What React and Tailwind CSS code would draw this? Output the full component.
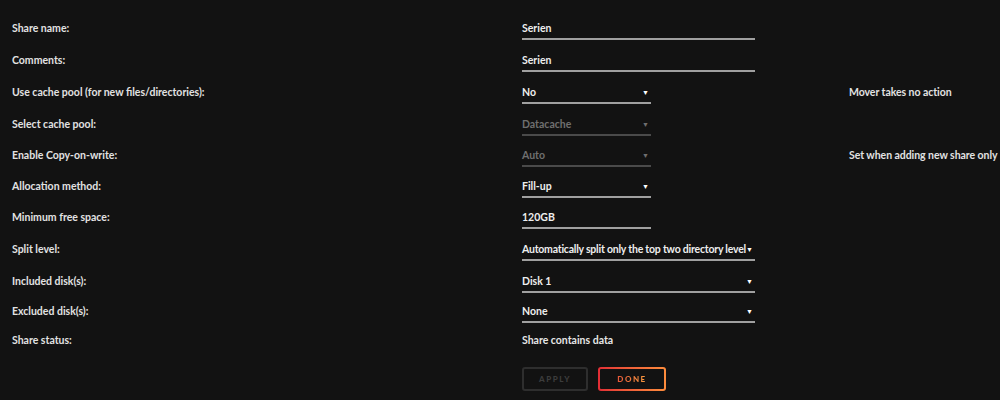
import { useState } from 'react';

const rows = [
  { label: 'Share name:', kind: 'input', value: 'Serien', w: 'w-[233px]', h: 'h-[32px]' },
  { label: 'Comments:', kind: 'input', value: 'Serien', w: 'w-[233px]', h: 'h-[32px]' },
  { label: 'Use cache pool (for new files/directories):', kind: 'select', value: 'No', w: 'w-[129px]', h: 'h-[32px]', help: 'Mover takes no action' },
  { label: 'Select cache pool:', kind: 'select', value: 'Datacache', w: 'w-[129px]', h: 'h-[31px]', disabled: true },
  { label: 'Enable Copy-on-write:', kind: 'select', value: 'Auto', w: 'w-[129px]', h: 'h-[31px]', disabled: true, help: 'Set when adding new share only' },
  { label: 'Allocation method:', kind: 'select', value: 'Fill-up', w: 'w-[129px]', h: 'h-[31px]' },
  { label: 'Minimum free space:', kind: 'input', value: '120GB', w: 'w-[129px]', h: 'h-[32px]' },
  { label: 'Split level:', kind: 'select', value: 'Automatically split only the top two directory level', w: 'w-[233px]', h: 'h-[32px]', tight: true },
  { label: 'Included disk(s):', kind: 'select', value: 'Disk 1', w: 'w-[233px]', h: 'h-[30px]' },
  { label: 'Excluded disk(s):', kind: 'select', value: 'None', w: 'w-[233px]', h: 'h-[29px]' },
  { label: 'Share status:', kind: 'text', value: 'Share contains data', h: 'h-[28px]' },
];

function Control({ row }) {
  if (row.kind === 'text') {
    return <div className="leading-[22px] text-[#e6e6e6]">{row.value}</div>;
  }
  const line = row.disabled ? 'border-[#4a4a4a]' : 'border-[#a0a0a0]';
  const color = row.disabled ? 'text-[#6f6f6f]' : 'text-[#eeeeee]';
  return (
    <div className={`${row.w} h-[23px] border-b-2 ${line} flex items-start ${row.tight ? '' : 'justify-between'} leading-[22px] ${color}`}>
      <span className={`whitespace-nowrap ${row.tight ? 'tracking-[-0.22px]' : ''}`}>{row.value}</span>
      {row.kind === 'select' && (
        <span className={`text-[7px] leading-[22px] ${row.tight ? '' : 'pr-[2px]'} ${row.disabled ? 'text-[#6f6f6f]' : 'text-white'}`}>▼</span>
      )}
    </div>
  );
}

export default function App() {
  const [rowsState] = useState(rows);

  return (
    <div className="w-[1000px] h-[400px] bg-[#121212] pt-[12px] pl-[12px] overflow-hidden font-['Lato',sans-serif] font-bold text-[10.5px] text-[#e2e2e2]">
      {rowsState.map((row) => (
        <div key={row.label} className={`${row.h} grid grid-cols-[510px_327px_1fr] items-start pt-[5px]`}>
          <div className="leading-[22px]">{row.label}</div>
          <Control row={row} />
          <div className="leading-[22px] whitespace-nowrap tracking-[-0.05px]">{row.help}</div>
        </div>
      ))}
      <div className="flex gap-[10px] ml-[510px] mt-[15px]">
        <button className="w-[66px] h-[24px] border-2 border-[#2e2e2e] rounded-[3px] text-[8px] font-black tracking-[1.5px] text-[#3c3c3c]">
          APPLY
        </button>
        <div className="w-[68px] h-[24px] p-[2px] rounded-[3px] bg-gradient-to-r from-[#e22c35] to-[#fd8c3c]">
          <button className="w-full h-full bg-[#121212] rounded-[1px] text-[8px] font-black tracking-[1.5px]">
            <span className="bg-gradient-to-r from-[#e8573a] to-[#f79a3e] bg-clip-text text-transparent">DONE</span>
          </button>
        </div>
      </div>
    </div>
  );
}
